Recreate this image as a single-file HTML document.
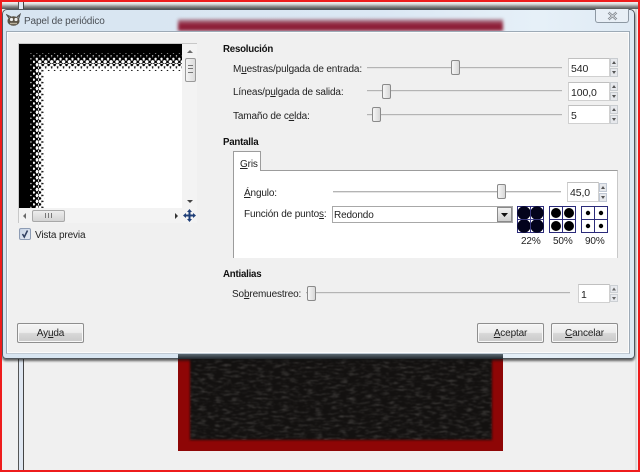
<!DOCTYPE html>
<html><head><meta charset="utf-8">
<style>
html,body{margin:0;padding:0;background:#f0f0f0}
#r{position:relative;width:640px;height:472px;overflow:hidden;background:#f0f0f0;font:10px "Liberation Sans",sans-serif;letter-spacing:-.14px;color:#222;filter:blur(.3px)}
#r div,#r span.a{position:absolute;box-sizing:border-box}
.t{position:absolute;white-space:nowrap;line-height:12px;margin-top:2px}
.b{font-weight:bold;color:#111;font-size:9.7px;letter-spacing:-.22px}
.tr{background:#b4b4b4;border-bottom:1px solid #e4e4e4;height:2px}
.th{width:9px;height:15px;border:1px solid #8a8a8a;border-radius:2px;background:linear-gradient(90deg,#f6f6f6,#d8d8d8)}
.sp{background:#fff;border:1px solid #d0d0d0;border-top-color:#c0c0c0}
.sp span{position:absolute;left:2px;top:4px;line-height:12px;font-size:10.5px;color:#222;letter-spacing:-.1px}
.btn{border:1px solid #8e8e8e;border-radius:2px;background:linear-gradient(#f4f4f4 0,#ececec 48%,#d8d8d8 52%,#c9c9c9 100%);text-align:center;line-height:20px;color:#222;box-shadow:inset 0 0 0 1px #f8f8f8}
</style></head><body>
<div id="r">
<!-- background window strips -->
<div style="left:0;top:2px;width:640px;height:7px;background:linear-gradient(#f2f2f2 0,#d8d8d8 30%,#8a8a8a 65%,#555 100%)"></div>
<div style="left:18px;top:0;width:6px;height:472px;background:#dfe7f2;border-left:1px solid #555;border-right:1px solid #444"></div>
<div style="left:635px;top:9px;width:2px;height:463px;background:#dcdcdc"></div>
<!-- red image -->
<div style="left:178px;top:340px;width:325px;height:111px;background:#8e0606"></div>
<div style="left:190px;top:340px;width:302px;height:100px;background:#131110;filter:blur(1px)"></div>
<svg style="position:absolute;left:190px;top:358px" width="302" height="82"><filter id="n"><feTurbulence type="fractalNoise" baseFrequency=".12 .45" numOctaves="3" seed="4"/><feColorMatrix values="0 0 0 0 .4 0 0 0 0 .38 0 0 0 0 .36 .7 0 0 0 -.33"/><feGaussianBlur stdDeviation=".5"/></filter><rect width="302" height="82" filter="url(#n)"/></svg>
<!-- shadow and dialog frame -->
<div style="left:2px;top:9px;width:633px;height:350px;border-radius:5px 5px 4px 4px;background:linear-gradient(90deg,#d8e5f1 0,#dbe8f4 60%,#e6f0f8 85%,#dfeaf4 100%);border:1px solid #50565c;box-shadow:0 2px 2px rgba(20,20,20,.65)"></div>
<div style="left:178px;top:19px;width:325px;height:12px;background:linear-gradient(#b8a0ae,#8f1f38 45%,#8c2038);filter:blur(1.5px)"></div>
<div style="left:6px;top:31px;width:624px;height:323px;background:#f0f0f0;border:1px solid #9daab6;border-bottom-color:#c0cad4;box-shadow:inset 0 0 0 1px #fbfbfb"></div>
<div style="left:178px;top:354px;width:325px;height:5px;background:linear-gradient(#5c6a74,#20262b)"></div>
<div style="left:595px;top:9px;width:34px;height:14px;border:1px solid #8d98a3;border-top:0;border-radius:0 0 3px 3px;background:#e8eff6"></div>
<svg style="position:absolute;left:607px;top:11px" width="11" height="10"><path d="M1.500 1.500L9.500 8.500M9.500 1.500L1.500 8.500" stroke="#7b828a" stroke-width="2.400"/><path d="M1.500 1.500L9.500 8.500M9.500 1.500L1.500 8.500" stroke="#eef2f6" stroke-width=".8"/></svg>
<!-- title -->
<svg style="position:absolute;left:6px;top:13px" width="15" height="14"><ellipse cx="7.500" cy="8" rx="6" ry="4.800" fill="#5a5346"/><path d="M3 5L1 2L5 4M11 4L14 1.500L12.500 6" stroke="#555" stroke-width="1.200" fill="none"/><circle cx="5.500" cy="6.500" r="1.600" fill="#eee"/><circle cx="10" cy="6.500" r="1.600" fill="#eee"/><path d="M4 10.500h7" stroke="#b9b09a" stroke-width="1.400"/></svg>
<span class="t" style="left:24px;top:14px;color:#4a4f55;letter-spacing:-.12px">Papel de periódico</span>

<!-- preview -->
<div style="left:18px;top:43px;width:179px;height:180px;background:#f3f3f3;border:1px solid #c8c8c8;border-right:0;border-bottom:0"></div>
<svg style="position:absolute;left:19px;top:44px" width="163" height="164">
<defs>
<pattern id="p1" width="4.200" height="4.200" patternUnits="userSpaceOnUse" patternTransform="rotate(45 0 0)"><rect width="5" height="5" fill="#000"/><circle cx="2.100" cy="2.100" r=".65" fill="#fff"/></pattern>
<pattern id="p2" width="4.200" height="4.200" patternUnits="userSpaceOnUse" patternTransform="rotate(45 0 0)"><rect width="5" height="5" fill="#000"/><circle cx="2.100" cy="2.100" r="1.200" fill="#fff"/></pattern>
<pattern id="p3" width="4.200" height="4.200" patternUnits="userSpaceOnUse" patternTransform="rotate(45 0 0)"><rect width="5" height="5" fill="#000"/><circle cx="2.100" cy="2.100" r="1.700" fill="#fff"/></pattern>
<pattern id="p4" width="4.200" height="4.200" patternUnits="userSpaceOnUse" patternTransform="rotate(45 0 0)"><rect width="5" height="5" fill="#fff"/><circle cx="2.100" cy="2.100" r="1.350" fill="#000"/></pattern>
<pattern id="p5" width="4.200" height="4.200" patternUnits="userSpaceOnUse" patternTransform="rotate(45 0 0)"><rect width="5" height="5" fill="#fff"/><circle cx="2.100" cy="2.100" r=".8" fill="#000"/></pattern>
</defs>
<rect width="163" height="164" fill="#000"/>
<rect x="11" y="9" width="152" height="155" fill="url(#p1)"/>
<rect x="14" y="13" width="149" height="151" fill="url(#p2)"/>
<rect x="17" y="16" width="146" height="148" fill="url(#p3)"/>
<rect x="20" y="20" width="143" height="144" fill="url(#p4)"/>
<rect x="23" y="23" width="140" height="141" fill="url(#p5)"/>
<rect x="26" y="27" width="137" height="137" fill="#fff"/>
</svg>
<svg style="position:absolute;left:184px;top:46px" width="12" height="160"><path d="M3 7l3-3 3 3z" fill="#6a6a6a"/><path d="M3 154l3 3 3-3z" fill="#444"/></svg>
<div style="left:185px;top:58px;width:11px;height:24px;border:1px solid #9a9a9a;border-radius:2px;background:linear-gradient(90deg,#f4f4f4,#dcdcdc)"></div>
<div style="left:188px;top:65px;width:5px;height:8px;border-top:1px solid #777;border-bottom:1px solid #777"></div>
<div style="left:188px;top:68px;width:5px;height:2px;border-top:1px solid #777"></div>
<svg style="position:absolute;left:20px;top:210px" width="160" height="12"><path d="M6 3l-3 3 3 3z" fill="#6a6a6a"/><path d="M155 3l3 3-3 3z" fill="#333"/></svg>
<div style="left:32px;top:210px;width:33px;height:12px;border:1px solid #a8a8a8;border-radius:2px;background:linear-gradient(#ededed,#d4d4d4)"></div>
<div style="left:45px;top:213px;width:7px;height:5px;background:repeating-linear-gradient(90deg,#777 0 1px,transparent 1px 3px)"></div>
<svg style="position:absolute;left:183px;top:209px" width="13" height="13"><path d="M6.500 0L9 3H7.500V5.500H10V4L13 6.500 10 9V7.500H7.500V10H9L6.500 13 4 10H5.500V7.500H3V9L0 6.500 3 4V5.500H5.500V3H4z" fill="#1f3f78"/></svg>
<div style="left:19px;top:228px;width:12px;height:12px;border:1px solid #8d9cb4;border-radius:2px;background:linear-gradient(135deg,#c8d4e6,#e4eaf3)"></div>
<svg style="position:absolute;left:20px;top:229px" width="10" height="10"><path d="M2.500 5L4.300 8 7.500 1.500" stroke="#2f3f60" stroke-width="1.500" fill="none"/></svg>
<span class="t" style="left:35px;top:228px">Vista previa</span>

<!-- Resolucion -->
<span class="t b" style="left:223px;top:42px">Resolución</span>
<span class="t" style="left:233px;top:62px">M<u>u</u>estras/pulgada de entrada:</span>
<div class="tr" style="left:367px;top:67px;width:195px"></div>
<div class="th" style="left:451px;top:60px"></div>
<div class="sp" style="left:568px;top:58px;width:42px;height:19px"><span>540</span></div>
<span class="t" style="left:233px;top:85px">Líneas/p<u>u</u>lgada de salida:</span>
<div class="tr" style="left:367px;top:90px;width:195px"></div>
<div class="th" style="left:382px;top:84px"></div>
<div class="sp" style="left:568px;top:82px;width:42px;height:19px"><span>100,0</span></div>
<span class="t" style="left:233px;top:109px">Tamaño de c<u>e</u>lda:</span>
<div class="tr" style="left:367px;top:114px;width:195px"></div>
<div class="th" style="left:372px;top:107px"></div>
<div class="sp" style="left:568px;top:105px;width:42px;height:19px"><span>5</span></div>
<svg style="position:absolute;left:610px;top:58px" width="9" height="68" fill="#e6e8ec" stroke="#c8ccd0"><rect x=".5" y=".5" width="7" height="8"/><rect x=".5" y="10.500" width="7" height="8"/><rect x=".5" y="24.500" width="7" height="8"/><rect x=".5" y="34.500" width="7" height="8"/><rect x=".5" y="47.500" width="7" height="8"/><rect x=".5" y="57.500" width="7" height="8"/><g fill="#555" stroke="none"><path d="M2 6l2-3 2 3zM2 13l2 3 2-3zM2 30l2-3 2 3zM2 37l2 3 2-3zM2 53l2-3 2 3zM2 60l2 3 2-3z"/></g></svg>

<!-- Pantalla -->
<span class="t b" style="left:223px;top:135px">Pantalla</span>
<div style="left:233px;top:170px;width:385px;height:88px;background:#fff;border:1px solid #9c9c9c;border-right-color:#c8c8c8;border-bottom:0"></div>
<div style="left:233px;top:151px;width:28px;height:20px;background:#fff;border:1px solid #9c9c9c;border-bottom:0"></div>
<span class="t" style="left:240px;top:157px"><u>G</u>ris</span>
<span class="t" style="left:244px;top:186px"><u>Á</u>ngulo:</span>
<div class="tr" style="left:333px;top:191px;width:228px"></div>
<div class="th" style="left:497px;top:184px"></div>
<div class="sp" style="left:567px;top:182px;width:32px;height:20px"><span>45,0</span></div>
<svg style="position:absolute;left:599px;top:183px" width="9" height="20" fill="#e6e8ec" stroke="#c0c8d4"><rect x=".5" y=".5" width="7" height="8"/><rect x=".5" y="10.500" width="7" height="8"/><g fill="#555" stroke="none"><path d="M2 6l2-3 2 3zM2 13l2 3 2-3z"/></g></svg>
<span class="t" style="left:244px;top:207px">Función de punto<u>s</u>:</span>
<div style="left:332px;top:206px;width:181px;height:17px;background:#fff;border:1px solid #a8a8a8"><span class="t" style="left:1px;top:1px">Redondo</span></div>
<div style="left:497px;top:207px;width:15px;height:15px;background:linear-gradient(#f2f2f2,#cfcfcf);border:1px solid #8a8a8a"></div>
<svg style="position:absolute;left:500px;top:212px" width="9" height="6"><path d="M1 1h7L4.500 5z" fill="#111"/></svg>
<svg style="position:absolute;left:517px;top:206px" width="92" height="27">
<g stroke="#2b2b7a" fill="#fff"><rect x=".5" y=".5" width="26" height="26"/><path d="M13.500 .5v26M.5 13.500h26"/><rect x="32.500" y=".5" width="26" height="26"/><path d="M45.500 .5v26M32.500 13.500h26"/><rect x="64.500" y=".5" width="26" height="26"/><path d="M77.500 .5v26M64.500 13.500h26"/></g>
<g fill="#03031c"><circle cx="7" cy="7" r="6.700"/><circle cx="20" cy="7" r="6.700"/><circle cx="7" cy="20" r="6.700"/><circle cx="20" cy="20" r="6.700"/></g>
<path d="M13.500 2v23M2 13.500h23" stroke="#4a4a9a" stroke-width=".8"/>
<g fill="#000"><circle cx="39" cy="7" r="5"/><circle cx="52" cy="7" r="5"/><circle cx="39" cy="20" r="5"/><circle cx="52" cy="20" r="5"/><circle cx="71" cy="7" r="2.200"/><circle cx="84" cy="7" r="2.200"/><circle cx="71" cy="20" r="2.200"/><circle cx="84" cy="20" r="2.200"/></g>
</svg>
<span class="t" style="left:521px;top:234px">22%</span>
<span class="t" style="left:553px;top:234px">50%</span>
<span class="t" style="left:585px;top:234px">90%</span>

<!-- Antialias -->
<span class="t b" style="left:223px;top:267px">Antialias</span>
<span class="t" style="left:232px;top:287px">So<u>b</u>remuestreo:</span>
<div class="tr" style="left:306px;top:292px;width:264px"></div>
<div class="th" style="left:307px;top:286px"></div>
<div class="sp" style="left:578px;top:284px;width:32px;height:19px"><span>1</span></div>
<svg style="position:absolute;left:610px;top:285px" width="9" height="18" fill="#e8eaee" stroke="#ccd0d4"><rect x=".5" y=".5" width="7" height="7"/><rect x=".5" y="9.500" width="7" height="7"/><g fill="#666" stroke="none"><path d="M2 5.500l2-3 2 3zM2 12l2 3 2-3z"/></g></svg>

<!-- buttons -->
<div class="btn" style="left:17px;top:323px;width:67px;height:20px">Ay<u>u</u>da</div>
<div class="btn" style="left:477px;top:323px;width:67px;height:20px"><u>A</u>ceptar</div>
<div class="btn" style="left:551px;top:323px;width:67px;height:20px"><u>C</u>ancelar</div>

<!-- outer red border -->
<div style="left:0;top:0;width:640px;height:472px;border:2px solid #ee1c1c"></div>
</div>
</body></html>
